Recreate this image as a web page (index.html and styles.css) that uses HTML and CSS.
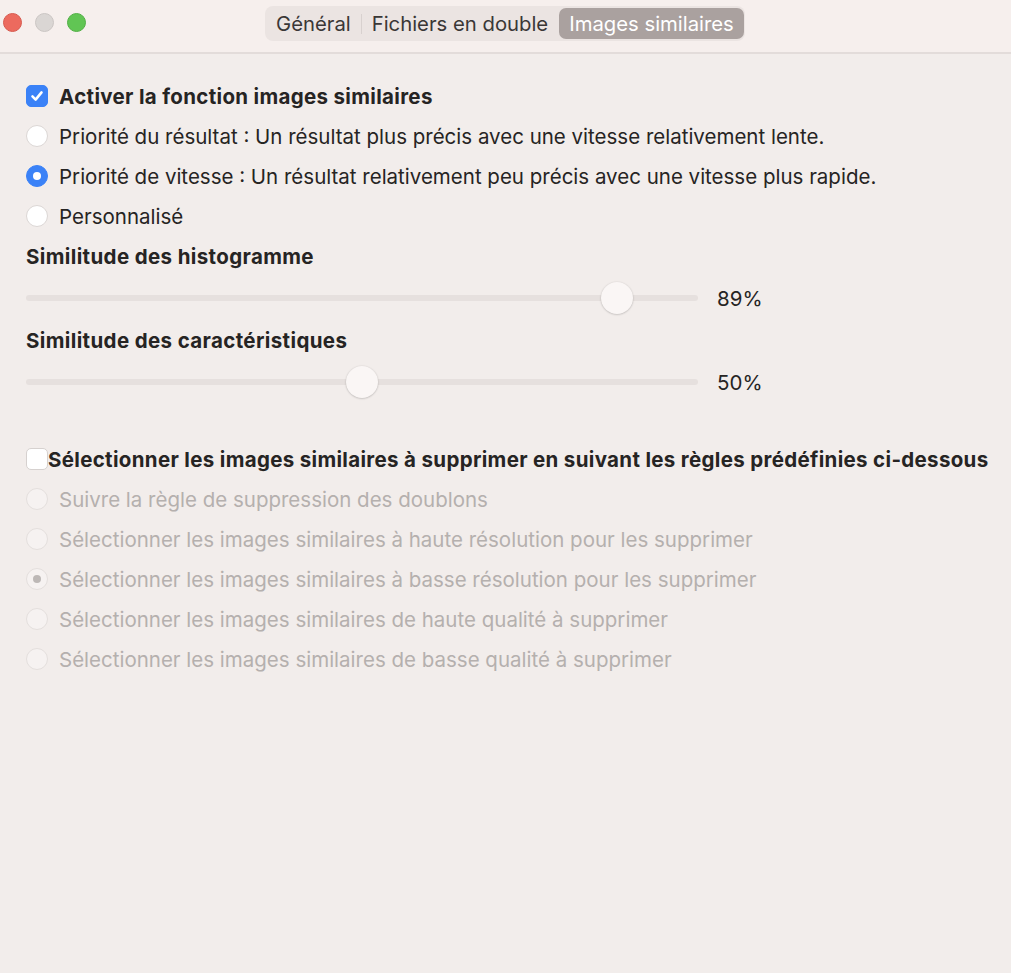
FILE: index.html
```html
<!DOCTYPE html>
<html lang="fr">
<head>
<meta charset="utf-8">
<link rel="stylesheet" href="styles.css">
</head>
<body>
<div class="window">
  <header class="titlebar">
    <div class="lights">
      <span class="light red"></span>
      <span class="light gray"></span>
      <span class="light green"></span>
    </div>
    <div class="segmented">
      <span class="seg">Général</span>
      <span class="sep"></span>
      <span class="seg">Fichiers en double</span>
      <span class="seg active">Images similaires</span>
    </div>
  </header>
  <main class="content">
    <label class="row bold">
      <span class="checkbox checked"><svg viewBox="0 0 22 22" width="22" height="22"><path d="M6 11.5 L9.5 15 L16 7" fill="none" stroke="#fff" stroke-width="2.8" stroke-linecap="round" stroke-linejoin="round"/></svg></span>
      <span>Activer la fonction images similaires</span>
    </label>
    <label class="row"><span class="radio"></span><span>Priorité du résultat : Un résultat plus précis avec une vitesse relativement lente.</span></label>
    <label class="row"><span class="radio on"></span><span>Priorité de vitesse : Un résultat relativement peu précis avec une vitesse plus rapide.</span></label>
    <label class="row"><span class="radio"></span><span>Personnalisé</span></label>

    <div class="slider-block">
      <div class="heading">Similitude des histogramme</div>
      <div class="slider-row">
        <div class="track"><span class="thumb" style="left: 88%"></span></div>
        <span class="value">89%</span>
      </div>
    </div>
    <div class="slider-block">
      <div class="heading">Similitude des caractéristiques</div>
      <div class="slider-row">
        <div class="track"><span class="thumb" style="left: 50%"></span></div>
        <span class="value">50%</span>
      </div>
    </div>

    <label class="row bold rule-head">
      <span class="checkbox"></span>
      <span>Sélectionner les images similaires à supprimer en suivant les règles prédéfinies ci-dessous</span>
    </label>
    <div class="disabled">
      <label class="row"><span class="radio"></span><span>Suivre la règle de suppression des doublons</span></label>
      <label class="row"><span class="radio"></span><span>Sélectionner les images similaires à haute résolution pour les supprimer</span></label>
      <label class="row"><span class="radio on"></span><span>Sélectionner les images similaires à basse résolution pour les supprimer</span></label>
      <label class="row"><span class="radio"></span><span>Sélectionner les images similaires de haute qualité à supprimer</span></label>
      <label class="row"><span class="radio"></span><span>Sélectionner les images similaires de basse qualité à supprimer</span></label>
    </div>
  </main>
</div>
</body>
</html>
```

FILE: styles.css
```css
* { box-sizing: border-box; }
html, body {
  margin: 0;
  padding: 0;
  height: 100%;
}
body {
  font-family: Inter, "Noto Sans", sans-serif;
  color: #262423;
  background: #f2edeb;
}
.window {
  width: 1011px;
  height: 973px;
  background: #f2edeb;
}
.titlebar {
  height: 54px;
  background: #f6efed;
  border-bottom: 2px solid #e3dcda;
  display: flex;
  align-items: flex-start;
  position: relative;
}
.lights {
  display: flex;
  gap: 13px;
  padding: 13px 0 0 3px;
}
.light {
  width: 19px;
  height: 19px;
  border-radius: 50%;
  display: block;
}
.red { background: #ec6a5e; border: 1px solid #d75a4f; }
.gray { background: #dad6d4; border: 1px solid #cbc6c4; }
.green { background: #61c554; border: 1px solid #52b046; }
.segmented {
  position: absolute;
  left: 265px;
  top: 6px;
  height: 35px;
  display: flex;
  align-items: center;
  background: #ebe4e2;
  border-radius: 8px;
  padding: 0 1px;
  font-size: 20.3px;
  color: #3a3736;
}
.seg {
  padding: 0 10px;
  line-height: 31px;
  border-radius: 7px;
}
.seg.active {
  background: #aaa19f;
  color: #fff;
  margin-left: 1px;
}
.sep {
  width: 1px;
  height: 20px;
  background: #d8d1cf;
}
.content {
  padding: 22px 0 0 26px;
  font-size: 20.5px;
}
.row {
  display: flex;
  align-items: center;
  gap: 11px;
  height: 40px;
  white-space: nowrap;
}
.bold {
  font-weight: 700;
  letter-spacing: 0.33px;
}
.checkbox {
  width: 22px;
  height: 22px;
  border-radius: 5px;
  background: #fff;
  border: 1px solid #d6d1cf;
  display: flex;
  align-items: center;
  justify-content: center;
  flex: none;
}
.checkbox.checked {
  background: #3b82f7;
  border-color: #3b82f7;
}
.radio {
  width: 22px;
  height: 22px;
  border-radius: 50%;
  background: #fff;
  border: 1px solid #dcd7d5;
  flex: none;
  display: flex;
  align-items: center;
  justify-content: center;
}
.radio.on {
  background: #3b82f7;
  border-color: #3b82f7;
}
.radio.on::after {
  content: "";
  width: 8px;
  height: 8px;
  border-radius: 50%;
  background: #fff;
}
.slider-block { margin-top: 1px; }
.slider-block + .slider-block { margin-top: 3px; }
.heading {
  font-weight: 700;
  letter-spacing: 0.37px;
  height: 40px;
  line-height: 40px;
}
.slider-row {
  display: flex;
  align-items: center;
  height: 41px;
}
.track {
  position: relative;
  width: 672px;
  height: 6px;
  border-radius: 3px;
  background: #e6e0de;
}
.thumb {
  position: absolute;
  top: 50%;
  width: 32px;
  height: 32px;
  margin: -16px 0 0 -16px;
  border-radius: 50%;
  background: #faf6f5;
  box-shadow: 0 0.5px 2px rgba(0,0,0,0.25);
}
.value {
  margin-left: 19px;
  padding-top: 2px;
}
.rule-head {
  margin-top: 37px;
  gap: 0;
}
.disabled .row { color: #b5b0ae; }
.disabled .radio {
  background: #f6f2f1;
  border-color: #e4dfdd;
}
.disabled .radio.on {
  background: #f6f2f1;
  border-color: #e4dfdd;
}
.disabled .radio.on::after { background: #bdb8b6; }
```
